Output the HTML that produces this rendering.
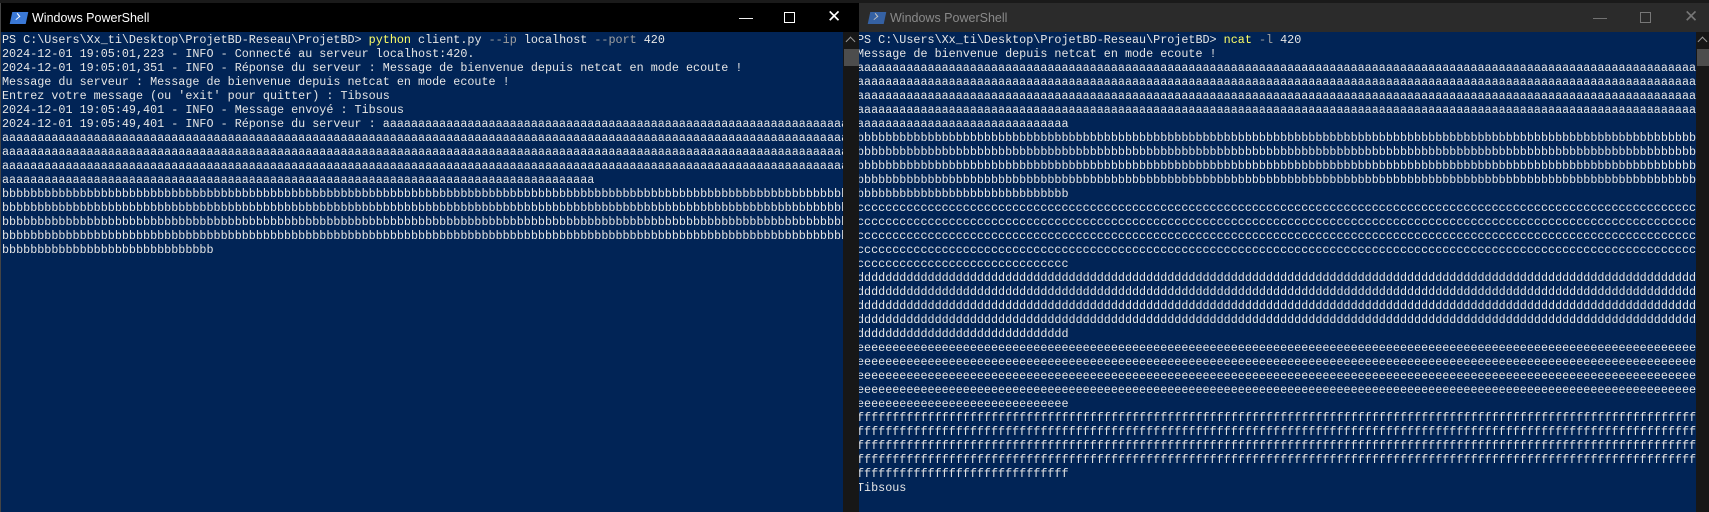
<!DOCTYPE html>
<html><head><meta charset="utf-8"><style>
*{margin:0;padding:0;box-sizing:border-box}
body{width:1709px;height:512px;background:#1a1a1a;position:relative;overflow:hidden;font-family:"Liberation Mono",monospace}
.win{position:absolute;top:3px;height:509px;overflow:hidden}
.title{position:absolute;left:0;right:0;top:0;height:29px;font-family:"Liberation Sans",sans-serif;font-size:12.5px}
.title .t{position:absolute;left:31px;top:8px}
.ico{position:absolute;left:10px;top:9px;width:16px;height:12px;background:#3a78d6;transform:skewX(-12deg)}
.ico:after{content:"";position:absolute;left:3px;top:2px;width:4px;height:4px;border-right:1.5px solid #fff;border-bottom:1.5px solid #fff;transform:rotate(-45deg)}
.btn{position:absolute;top:6px;font-size:14px}
.content{position:absolute;top:29px;left:0;bottom:0;background:#012456;overflow:hidden;padding-top:1px}
.l{height:14px;line-height:14px;font-size:11.75px;white-space:pre;overflow:hidden;color:#e6e6e6}
.sb{position:absolute;top:29px;bottom:0;width:16px;background:#171717}
.thumb{position:absolute;left:1px;top:17px;width:15px;height:17px;background:#4d4d4d}
.arr{position:absolute;left:4px;top:6px;width:7px;height:7px;border-left:1.5px solid #999;border-top:1.5px solid #999;transform:rotate(45deg)}
.y{color:#ffff66}.g{color:#a0a0a0}
</style></head><body>
<div class="win" style="left:0;width:859px;border-left:1px solid #444">
 <div class="title" style="background:#000;color:#fff"><div class="ico"></div><span class="t">Windows PowerShell</span>
  <span class="btn" style="left:738px">&#8212;</span><span class="btn" style="left:783px;top:9px;width:11px;height:11px;border:1.3px solid #fff"></span><span class="btn" style="left:826px;top:4px;font-size:17px">&#x2715;</span></div>
 <div class="content" style="width:842px;padding-left:1px" id="L"></div>
 <div class="sb" style="left:842px"><div class="arr"></div><div class="thumb"></div></div>
</div>
<div class="win" style="left:859px;width:850px">
 <div class="title" style="background:#2b2b2b;color:#8a8a8a"><div class="ico" style="opacity:.7"></div><span class="t">Windows PowerShell</span>
  <span class="btn" style="left:734px;color:#777">&#8212;</span><span class="btn" style="left:781px;top:9px;width:11px;height:11px;border:1.3px solid #777"></span><span class="btn" style="left:825px;top:4px;font-size:17px;color:#777">&#x2715;</span></div>
 <div class="content" style="width:837px;padding-left:0;text-indent:-2px" id="R"></div>
 <div class="sb" style="left:837px;width:13px"><div class="arr" style="left:3px"></div><div class="thumb" style="width:12px"></div></div>
</div>
<script>
function rep(c,n){return c.repeat(n)}
var L=[
'PS C:\\Users\\Xx_ti\\Desktop\\ProjetBD-Reseau\\ProjetBD> <span class="y">python</span> client.py <span class="g">--ip</span> localhost <span class="g">--port</span> 420',
'2024-12-01 19:05:01,223 - INFO - Connecté au serveur localhost:420.',
'2024-12-01 19:05:01,351 - INFO - Réponse du serveur : Message de bienvenue depuis netcat en mode ecoute !',
'Message du serveur : Message de bienvenue depuis netcat en mode ecoute !',
"Entrez votre message (ou 'exit' pour quitter) : Tibsous",
'2024-12-01 19:05:49,401 - INFO - Message envoyé : Tibsous',
'2024-12-01 19:05:49,401 - INFO - Réponse du serveur : '+rep('a',80),
rep('a',130),rep('a',130),rep('a',130),rep('a',84),
rep('b',130),rep('b',130),rep('b',130),rep('b',130),rep('b',30)];
var R=['PS C:\\Users\\Xx_ti\\Desktop\\ProjetBD-Reseau\\ProjetBD> <span class="y">ncat</span> <span class="g">-l</span> 420',
'Message de bienvenue depuis netcat en mode ecoute !'];
'abcdef'.split('').forEach(function(c){for(var i=0;i<4;i++)R.push(rep(c,130));R.push(rep(c,30));});
R.push('Tibsous');
document.getElementById('L').innerHTML=L.map(function(s){return '<div class="l">'+s+'</div>'}).join('');
document.getElementById('R').innerHTML=R.map(function(s){return '<div class="l">'+s+'</div>'}).join('');
</script>
</body></html>
